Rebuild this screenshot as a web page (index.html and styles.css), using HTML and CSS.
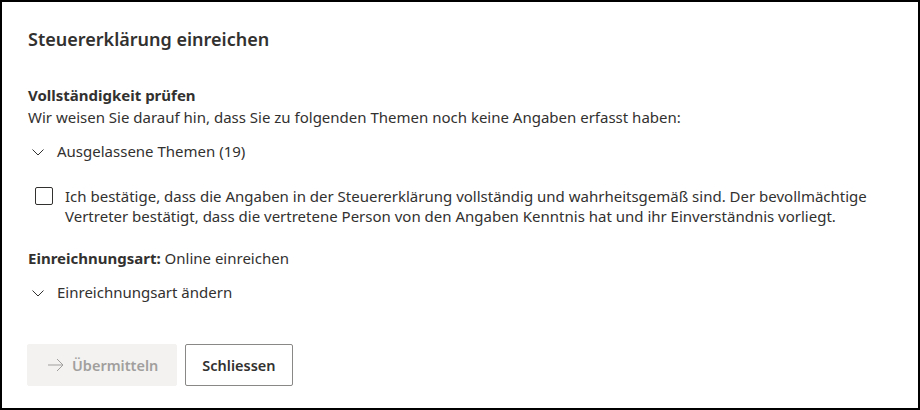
FILE: index.html
```html
<!DOCTYPE html>
<html lang="de">
<head>
<meta charset="utf-8">
<title>Steuererklärung einreichen</title>
<link rel="stylesheet" href="styles.css">
</head>
<body>
<div class="dialog">
  <h1 class="title">Steuererklärung einreichen</h1>

  <section class="check">
    <h2 class="check-heading">Vollständigkeit prüfen</h2>
    <p class="check-text">Wir weisen Sie darauf hin, dass Sie zu folgenden Themen noch keine Angaben erfasst haben:</p>
    <div class="toggle">
      <svg class="chevron" viewBox="0 0 12 7" width="12" height="7"><path d="M0.5 0.5 L6 6 L11.5 0.5" fill="none" stroke="#323130" stroke-width="1"/></svg>
      <span>Ausgelassene Themen (19)</span>
    </div>
  </section>

  <label class="confirm">
    <span class="box"></span>
    <span class="confirm-text">Ich bestätige, dass die Angaben in der Steuererklärung vollständig und wahrheitsgemäß sind. Der bevollmächtige Vertreter bestätigt, dass die vertretene Person von den Angaben Kenntnis hat und ihr Einverständnis vorliegt.</span>
  </label>

  <p class="mode"><strong>Einreichnungsart:</strong> Online einreichen</p>
  <div class="toggle">
    <svg class="chevron" viewBox="0 0 12 7" width="12" height="7"><path d="M0.5 0.5 L6 6 L11.5 0.5" fill="none" stroke="#323130" stroke-width="1"/></svg>
    <span>Einreichnungsart ändern</span>
  </div>

  <div class="actions">
    <button class="btn btn-primary" disabled>
      <svg class="arrow" viewBox="0 0 16 14" width="16" height="14"><path d="M0 7 H15 M9 1 L15 7 L9 13" fill="none" stroke="#a19f9d" stroke-width="1"/></svg>
      <span>Übermitteln</span>
    </button>
    <button class="btn btn-default">Schliessen</button>
  </div>
</div>
</body>
</html>
```

FILE: styles.css
```css
* { box-sizing: border-box; }

html, body {
  margin: 0;
  padding: 0;
  background: #fff;
}

body {
  font-family: "Noto Sans", "Open Sans", sans-serif;
  font-size: 15px;
  line-height: 20px;
  color: #323130;
}

.dialog {
  width: 920px;
  height: 410px;
  border: 2px solid #000;
  padding: 23px 28px 0 26px;
  display: flex;
  flex-direction: column;
}

.title {
  margin: 0;
  font-size: 18px;
  line-height: 28px;
  font-weight: 600;
}

.check {
  margin-top: 32px;
}

.check-heading {
  margin: 0;
  font-size: 15px;
  line-height: 20px;
  font-weight: 700;
}

.check-text {
  margin: 2px 0 0;
}

.toggle {
  display: flex;
  align-items: center;
  height: 32px;
  margin-top: 8px;
  padding-left: 4px;
}

.chevron {
  flex: none;
  margin-right: 13px;
  margin-top: 2px;
}

.confirm {
  display: flex;
  align-items: flex-start;
  margin-top: 19px;
  padding-left: 7px;
}

.box {
  flex: none;
  width: 18px;
  height: 18px;
  border: 1px solid #323130;
  border-radius: 2px;
  margin-top: 1px;
  margin-right: 12px;
}

.mode {
  margin: 22px 0 0;
}

.mode strong {
  font-weight: 700;
}

.actions {
  display: flex;
  gap: 8px;
  margin-top: 36px;
  margin-left: -1px;
}

.btn {
  font-family: inherit;
  font-size: 14.5px;
  font-weight: 600;
  height: 42px;
  border-radius: 2px;
  display: flex;
  align-items: center;
  padding: 0 16px;
}

.btn-primary {
  background: #f3f2f1;
  border: 1px solid #f3f2f1;
  color: #a19f9d;
  padding: 0 18px 0 20px;
}

.arrow {
  margin-right: 8px;
}

.btn-default {
  background: #fff;
  border: 1px solid #8a8886;
  color: #323130;
}
```
